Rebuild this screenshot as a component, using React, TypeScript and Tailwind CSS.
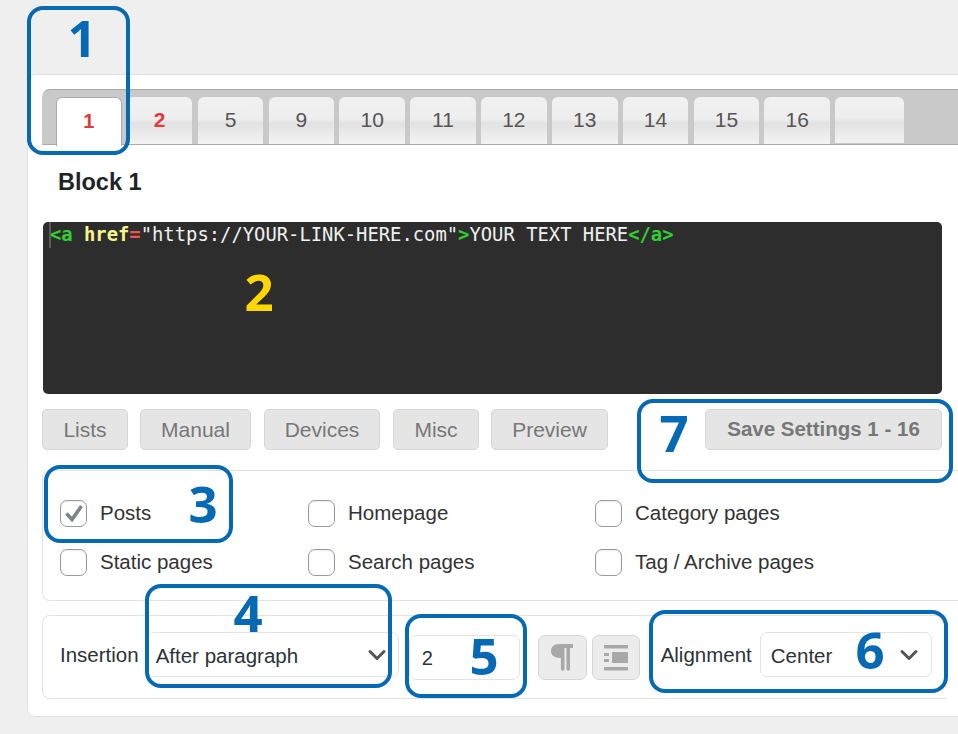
import React from 'react';
import { ChevronDown } from 'lucide-react';

const tabs = ['1', '2', '5', '9', '10', '11', '12', '13', '14', '15', '16'];
const tabBg = 'bg-[linear-gradient(to_bottom,#f1f1f1_0%,#eeeeee_46%,#e2e2e2_56%,#f3f3f3_100%)]';

const checkboxRows = [
  [
    { label: 'Posts', checked: true, width: 'w-[248px]' },
    { label: 'Homepage', width: 'w-[287px]' },
    { label: 'Category pages' },
  ],
  [
    { label: 'Static pages', width: 'w-[248px]' },
    { label: 'Search pages', width: 'w-[287px]' },
    { label: 'Tag / Archive pages' },
  ],
];

function Check({ label, checked, width }: { label: string; checked?: boolean; width?: string }) {
  return (
    <div className={`flex items-center ${width ?? ''}`}>
      <span className="flex h-[27px] w-[27px] items-center justify-center rounded-[7px] border border-[#9a9a9a] bg-white shadow-[inset_0_1px_2px_rgba(0,0,0,0.08)]">
        {checked && (
          <svg width="20" height="18" viewBox="0 0 20 18">
            <path d="M2.5 9.5 L8 15.5 L17.5 2" fill="none" stroke="#7b838a" strokeWidth="3.6" />
          </svg>
        )}
      </span>
      <span className="ml-[13px] text-[20.5px] text-[#333]">{label}</span>
    </div>
  );
}

function ActionButton({ label, width }: { label: string; width: string }) {
  return (
    <div className={`flex h-[41px] items-center justify-center rounded-[5px] border border-[#d6d6d6] bg-[#e5e5e5] text-[21px] text-[#777] ${width}`}>
      {label}
    </div>
  );
}

function Note({ className }: { className: string }) {
  return <div className={`absolute rounded-[16px] border-[4px] border-[#0569b3] ${className}`} />;
}

function Num({ n, className }: { n: string; className: string }) {
  return (
    <div className={`absolute -translate-x-1/2 -translate-y-1/2 font-['Open_Sans',sans-serif] text-[51px] leading-none font-bold ${className}`}>
      {n}
    </div>
  );
}

export default function App() {
  return (
    <div className="relative h-[734px] w-[958px] overflow-hidden bg-[#efefef] pt-[74px] pl-[27px] font-['Liberation_Sans',sans-serif]">
      <div className="h-[643px] w-[960px] rounded-[8px] border border-[#e0e0e0] bg-white pt-[14px] pl-[14px]">
        {/* tab bar */}
        <div className="relative flex h-[56px] w-[930px] gap-[5.25px] rounded-tl-[8px] border-y border-y-[#a9a9a9] border-l border-l-[#c9c9c9] bg-[#c9c9c9] pt-[7px] pl-[13px]">
          {tabs.map((t, i) => (
            <div
              key={t}
              className={
                i === 0
                  ? 'relative z-10 flex h-[49px] w-[65.6px] items-center justify-center rounded-t-[6px] border-x border-t border-[#aaa] bg-white pb-[3px] text-[20px] font-bold text-[#e0393e]'
                  : `flex h-[47px] w-[65.6px] items-center justify-center rounded-t-[6px] pb-[2px] text-[21px] ${tabBg} ${i === 1 ? 'font-bold text-[#e0393e]' : 'text-[#555]'}`
              }
            >
              {t}
            </div>
          ))}
          <div className={`h-[46px] w-[69px] rounded-t-[6px] ${tabBg}`} />
        </div>

        <div className="pt-[23px] pl-[16px] text-[23.5px] leading-[28px] font-bold text-[#1d2327]">Block 1</div>

        {/* code editor */}
        <div className="relative mt-[26px] ml-px h-[172px] w-[899px] rounded-[5px] bg-[#2d2d2d] pt-[1px] pl-[7px] font-['DejaVu_Sans_Mono',monospace] text-[18.83px] leading-[24px] whitespace-pre text-[#f0f0f0]">
          <div className="absolute top-0 left-[6px] h-[26px] w-[2px] bg-[#5a5a5a]" />
          <span className="relative font-bold text-[#2fd12f]">&lt;a </span>
          <span className="font-bold text-[#f5f58c]">href</span>
          <span className="font-bold text-[#f0554f]">=</span>
          <span>"https://YOUR-LINK-HERE.com"</span>
          <span className="font-bold text-[#2fd12f]">&gt;</span>
          <span>YOUR TEXT HERE</span>
          <span className="font-bold text-[#2fd12f]">&lt;/a&gt;</span>
        </div>

        {/* buttons */}
        <div className="mt-[15px] flex">
          <ActionButton label="Lists" width="w-[86px]" />
          <ActionButton label="Manual" width="ml-[12px] w-[111px]" />
          <ActionButton label="Devices" width="ml-[13px] w-[116px]" />
          <ActionButton label="Misc" width="ml-[13px] w-[86px]" />
          <ActionButton label="Preview" width="ml-[12px] w-[117px]" />
          <div className="ml-[97px] flex h-[41px] w-[237px] items-center justify-center rounded-[5px] border border-[#d6d6d6] bg-[#e5e5e5] text-[20.5px] font-bold text-[#777]">
            Save Settings 1 - 16
          </div>
        </div>

        {/* page types */}
        <div className="mt-[20px] flex h-[131px] w-[930px] flex-col gap-[18px] rounded-l-[8px] border-y border-l border-[#e3e3e3] pt-[27px] pl-[17px]">
          {checkboxRows.map((row, i) => (
            <div key={i} className="flex">
              {row.map(c => (
                <Check key={c.label} {...c} />
              ))}
            </div>
          ))}
        </div>

        {/* insertion */}
        <div className="mt-[14px] flex h-[84px] w-[904px] items-center rounded-l-[8px] border-y border-l border-[#e3e3e3] pl-[17px]">
          <span className="mb-[4px] text-[20.5px] text-[#2c3338]">Insertion</span>
          <div className="mb-[5px] ml-[8px] flex h-[45px] w-[252px] items-center justify-between rounded-[7px] border border-[#e3e3e3] pr-[7px] pl-[8px] text-[20.5px] text-[#2c3338]">
            <span className="mt-[3px]">After paragraph</span>
            <ChevronDown className="h-[28px] w-[28px] text-[#555]" strokeWidth={2.6} />
          </div>
          <div className="mt-[1px] ml-[10px] flex h-[45px] w-[111px] items-center rounded-[7px] border border-[#e3e3e3] pl-[12px] text-[20px] text-[#2c3338]">
            2
          </div>
          <div className="mt-[1px] ml-[18px] flex h-[45px] w-[49px] items-center justify-center rounded-[7px] border border-[#d6d6d6] bg-[#ececec]">
            <svg width="24" height="27" viewBox="0 0 24 27">
              <path d="M9 0 H23 V4 H20 V25 a1.8 1.8 0 0 1 -3.6 0 V4 H14.5 V25 a1.8 1.8 0 0 1 -3.6 0 V14 C4 14 1 11 1 7 C1 3 4 0 9 0 Z" fill="#a8a8a8" />
            </svg>
          </div>
          <div className="mt-[1px] ml-[5px] flex h-[45px] w-[48px] items-center justify-center rounded-[7px] border border-[#d6d6d6] bg-[#ececec]">
            <svg width="26" height="26" viewBox="0 0 26 26" fill="#a8a8a8">
              <rect x="1" y="0" width="24" height="3.5" />
              <rect x="1" y="8" width="5" height="3" />
              <rect x="1" y="14" width="5" height="3" />
              <rect x="9" y="7" width="16" height="11" />
              <rect x="1" y="22" width="24" height="3.5" />
            </svg>
          </div>
          <span className="mb-[4px] ml-[21px] text-[20.5px] text-[#2c3338]">Alignment</span>
          <div className="mb-[5px] ml-[8px] flex h-[45px] w-[172px] items-center justify-between rounded-[7px] border border-[#e3e3e3] pr-[8px] pl-[10px] text-[20.5px] text-[#2c3338]">
            <span className="mt-[3px]">Center</span>
            <ChevronDown className="h-[28px] w-[28px] text-[#555]" strokeWidth={2.6} />
          </div>
        </div>
      </div>

      {/* annotations */}
      <Note className="top-[6px] left-[27px] h-[149px] w-[103px]" />
      <Note className="top-[465px] left-[44px] h-[78px] w-[189px]" />
      <Note className="top-[584px] left-[145px] h-[104px] w-[247px]" />
      <Note className="top-[614px] left-[405px] h-[84px] w-[122px]" />
      <Note className="top-[610px] left-[649px] h-[83px] w-[299px]" />
      <Note className="top-[399px] left-[637px] h-[84px] w-[316px]" />
      <Num n="1" className="top-[37px] left-[82px] text-[#0569b3]" />
      <Num n="2" className="top-[291px] left-[259px] text-[#ffd700]" />
      <Num n="3" className="top-[503px] left-[203px] text-[#0569b3]" />
      <Num n="4" className="top-[612px] left-[248px] text-[#0569b3]" />
      <Num n="5" className="top-[655px] left-[484px] text-[#0569b3]" />
      <Num n="6" className="top-[649px] left-[870px] text-[#0569b3]" />
      <Num n="7" className="top-[432px] left-[674px] text-[#0569b3]" />
    </div>
  );
}
